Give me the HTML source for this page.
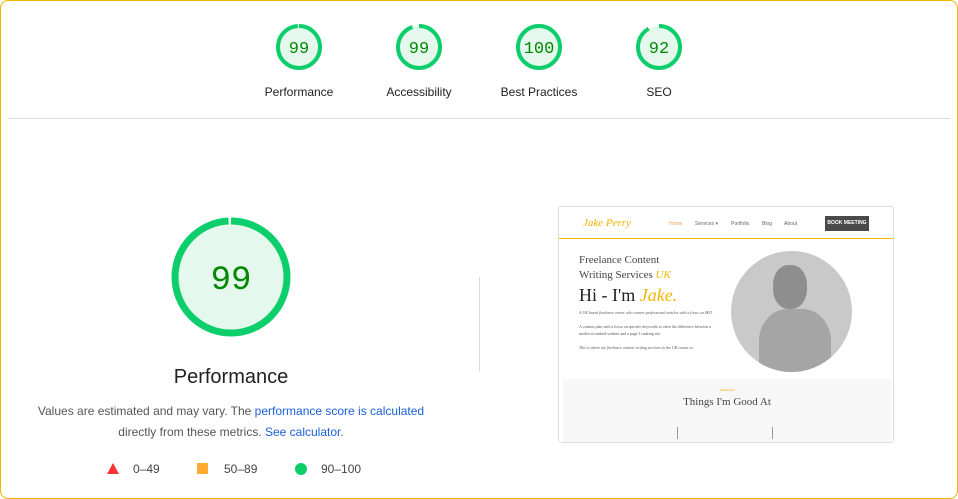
<!DOCTYPE html>
<html><head><meta charset="utf-8"><style>
*{margin:0;padding:0;box-sizing:border-box}
body{width:958px;height:499px;background:#fff;font-family:"Liberation Sans",Arial,sans-serif;position:relative;overflow:hidden}
.frame{position:absolute;left:0;top:0;width:958px;height:499px;border:1px solid #f4b400;border-radius:8px}
.a{position:absolute}
.lbl{font-size:12px;color:#212121;text-align:center;width:120px}
.g{font-family:"Liberation Mono",monospace;fill:#008800}
.sc{position:absolute;left:558px;top:206px;width:336px;height:237px;border:1px solid #ddd;border-radius:3px;background:#fff;overflow:hidden}
.serif{font-family:"Liberation Serif",serif}
</style></head><body>
<div class="frame"></div>
<svg class="a" style="left:0;top:0" width="958" height="499">
<g fill="#e5f8ed" stroke="#0cce6b" stroke-width="4">
<circle cx="299" cy="47" r="21" stroke-dasharray="130.6 132"  transform="rotate(-90 299 47)"/>
<circle cx="419" cy="47" r="21" stroke-dasharray="125 132" transform="rotate(-90 419 47)"/>
<circle cx="539" cy="47" r="21"/>
<circle cx="659" cy="47" r="21" stroke-dasharray="121 132" transform="rotate(-90 659 47)"/>
<circle cx="231" cy="277" r="56" stroke-width="7" stroke-dasharray="349 352" transform="rotate(-90 231 277)"/>
</g>
<g class="g" font-size="17" text-anchor="middle">
<text x="299" y="53">99</text><text x="419" y="53">99</text><text x="539" y="53">100</text><text x="659" y="53">92</text>
</g>
<text class="g" x="231" y="289" font-size="34" text-anchor="middle">99</text>
<line x1="8" y1="118.5" x2="950" y2="118.5" stroke="#ddd"/>
<line x1="479.5" y1="277" x2="479.5" y2="372" stroke="#ddd"/>
<polygon points="113,463 107,474 119,474" fill="#ff3333"/>
<rect x="197" y="463" width="11" height="11" fill="#ffaa33"/>
<circle cx="301" cy="469" r="6" fill="#0cce6b"/>
</svg>
<div class="a lbl" style="left:239px;top:85px">Performance</div>
<div class="a lbl" style="left:359px;top:85px">Accessibility</div>
<div class="a lbl" style="left:479px;top:85px">Best Practices</div>
<div class="a lbl" style="left:599px;top:85px">SEO</div>
<div class="a" style="left:0;top:366px;width:462px;text-align:center;font-size:20px;color:#212121">Performance</div>
<div class="a" style="left:0;top:401px;width:462px;text-align:center;font-size:12px;line-height:21px;color:#555">Values are estimated and may vary. The <span style="color:#1a5fd9">performance score is calculated</span><br>directly from these metrics. <span style="color:#1a5fd9">See calculator</span>.</div>
<div class="a" style="left:133px;top:462px;font-size:12px;color:#444">0–49</div>
<div class="a" style="left:224px;top:462px;font-size:12px;color:#444">50–89</div>
<div class="a" style="left:321px;top:462px;font-size:12px;color:#444">90–100</div>
<div class="sc">
 <div class="a serif" style="left:24px;top:10px;font-size:11px;color:#f4b400;font-style:italic">Jake Perry</div>
 <div class="a" style="left:110px;top:14px;font-size:5px;color:#e8a060">Home</div>
 <div class="a" style="left:136px;top:14px;font-size:5px;color:#666">Services ▾</div>
 <div class="a" style="left:172px;top:14px;font-size:5px;color:#666">Portfolio</div>
 <div class="a" style="left:203px;top:14px;font-size:5px;color:#666">Blog</div>
 <div class="a" style="left:225px;top:14px;font-size:5px;color:#666">About</div>
 <div class="a" style="left:266px;top:9px;width:44px;height:15px;background:#4a4a4a;color:#fff;font-size:5px;font-weight:bold;text-align:center;line-height:15px">BOOK MEETING</div>
 <div class="a" style="left:0;top:31px;width:336px;height:1px;background:#f4b400"></div>
 <div class="a serif" style="left:20px;top:46px;font-size:11px;line-height:15px;color:#444">Freelance Content<br>Writing Services <i style="color:#f4b400">UK</i></div>
 <div class="a serif" style="left:20px;top:78px;font-size:18px;color:#222">Hi - I'm <i style="color:#f4b400">Jake.</i></div>
 <div class="a serif" style="left:20px;top:102px;width:135px;font-size:4px;line-height:7px;color:#555"><i>A UK based freelance writer who creates professional articles with a focus on SEO.</i><br><br>A content plan with a focus on specific keywords is often the difference between a mediocre-ranked website and a page 1 ranking site.<br><br><i>This is where my freelance content writing services in the UK comes in...</i></div>
 <div class="a" style="left:172px;top:44px;width:121px;height:121px;border-radius:50%;background:#c9c9c9;overflow:hidden">
  <div class="a" style="left:28px;top:58px;width:72px;height:80px;border-radius:40% 40% 0 0;background:#a5a5a5"></div>
  <div class="a" style="left:42px;top:14px;width:34px;height:44px;border-radius:45%;background:#8e8e8e"></div>
 </div>
 <div class="a" style="left:4px;top:172px;width:328px;height:65px;background:#f7f7f7"></div>
 <div class="a" style="left:0;top:181px;width:336px;text-align:center;font-size:3px;color:#f4b400">SERVICES</div>
 <div class="a serif" style="left:0;top:189px;width:336px;text-align:center;font-size:11px;color:#444">Things I'm Good At</div>
 <div class="a" style="left:118px;top:220px;width:1px;height:12px;background:#999"></div>
 <div class="a" style="left:213px;top:220px;width:1px;height:12px;background:#999"></div>
</div>
</body></html>
